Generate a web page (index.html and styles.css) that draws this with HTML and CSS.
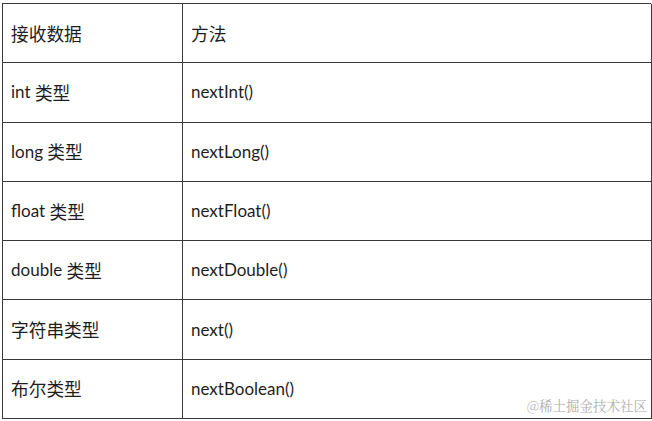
FILE: index.html
```html
<!DOCTYPE html>
<html lang="zh">
<head>
<meta charset="utf-8">
<link rel="stylesheet" href="styles.css">
</head>
<body>
<div class="sheet">
  <div class="grid">
    <div class="cell"><span class="zh">接收数据</span></div><div class="cell"><span class="zh">方法</span></div>
    <div class="cell">int&nbsp;<span class="zh">类型</span></div><div class="cell">nextInt()</div>
    <div class="cell">long&nbsp;<span class="zh">类型</span></div><div class="cell">nextLong()</div>
    <div class="cell">float&nbsp;<span class="zh">类型</span></div><div class="cell">nextFloat()</div>
    <div class="cell">double&nbsp;<span class="zh">类型</span></div><div class="cell">nextDouble()</div>
    <div class="cell"><span class="zh">字符串类型</span></div><div class="cell">next()</div>
    <div class="cell"><span class="zh">布尔类型</span></div><div class="cell">nextBoolean()</div>
  </div>
  <div class="watermark">@稀土掘金技术社区</div>
</div>
</body>
</html>
```
FILE: styles.css
```css
html, body {
  margin: 0;
  padding: 0;
  background: #ffffff;
}
.sheet {
  position: relative;
  width: 652px;
  height: 421px;
  padding: 3px 0 0 2px;
  box-sizing: border-box;
}
.grid {
  display: grid;
  grid-template-columns: 180px 469px;
  grid-auto-rows: 59.3px;
  border-top: 1px solid #3a3a3a;
  border-left: 1px solid #3a3a3a;
  width: 649px;
  box-sizing: border-box;
}
.cell {
  display: flex;
  align-items: center;
  padding: 0 0 1px 8px;
  border-right: 1px solid #3a3a3a;
  border-bottom: 1px solid #3a3a3a;
  font-family: Lato, "Noto Sans CJK SC", sans-serif;
  font-size: 17px;
  color: #1e1e1e;
  white-space: nowrap;
}
.zh {
  font-family: "Noto Sans CJK SC", sans-serif;
  font-size: 17.7px;
}
.watermark {
  position: absolute;
  right: 5px;
  bottom: 6px;
  font-family: "Noto Serif CJK SC", "Noto Sans CJK SC", serif;
  font-size: 13.5px;
  color: #b0b0b0;
}
```
